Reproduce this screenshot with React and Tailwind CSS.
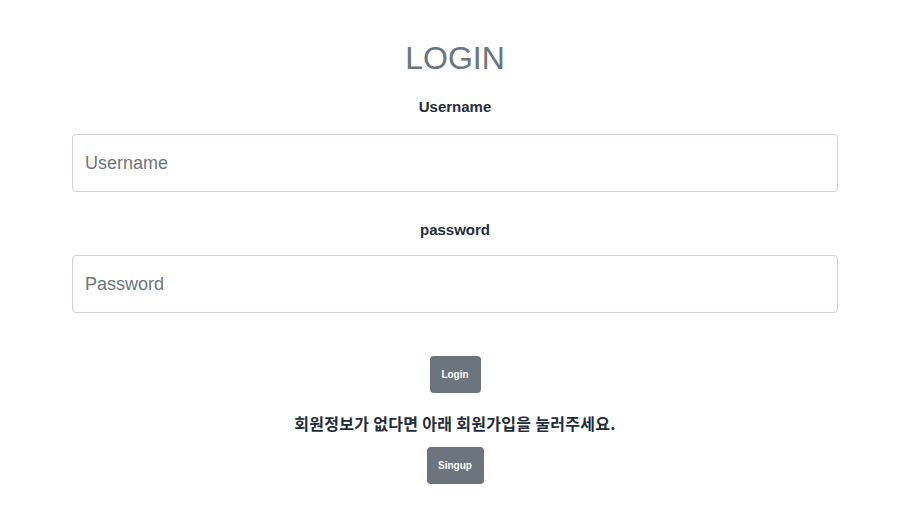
const App = () => {
  return (
    <div className="min-h-screen bg-white flex flex-col items-center pl-[72px] pr-[59px]" style={{ fontFamily: '"Liberation Sans", "Noto Sans CJK KR", sans-serif' }}>
      {/* Title */}
      <h1 className="mt-[39px] text-[32px] leading-[38px] text-[#6c757d] font-normal">LOGIN</h1>

      {/* Username */}
      <label className="mt-[19px] text-[15px] leading-[21px] font-bold text-[#1f2d3d]">Username</label>
      <input
        type="text"
        placeholder="Username"
        className="mt-[17px] w-full h-[58px] border border-[#ced4da] rounded-[4px] pl-3 text-[18px] text-[#495057] placeholder:text-[#6c757d] outline-none"
      />

      {/* Password */}
      <label className="mt-[27px] text-[15px] leading-[21px] font-bold text-[#1f2d3d]">password</label>
      <input
        type="password"
        placeholder="Password"
        className="mt-[15px] w-full h-[58px] border border-[#ced4da] rounded-[4px] pl-3 text-[18px] text-[#495057] placeholder:text-[#6c757d] outline-none"
      />

      {/* Buttons */}
      <button className="mt-[43px] w-[51px] h-[37px] rounded-[4px] bg-[#6c757d] text-white text-[10px] font-bold">
        Login
      </button>
      <p className="mt-[18px] text-[16px] leading-[24px] font-bold text-[#1f2d3d] tracking-[0.3px]" style={{ fontFamily: '"Noto Sans CJK KR", sans-serif' }}>
        회원정보가 없다면 아래 회원가입을 눌러주세요.
      </p>
      <button className="mt-[12px] w-[57px] h-[37px] rounded-[4px] bg-[#6c757d] text-white text-[10px] font-bold">
        Singup
      </button>
    </div>
  );
};

export default App;
